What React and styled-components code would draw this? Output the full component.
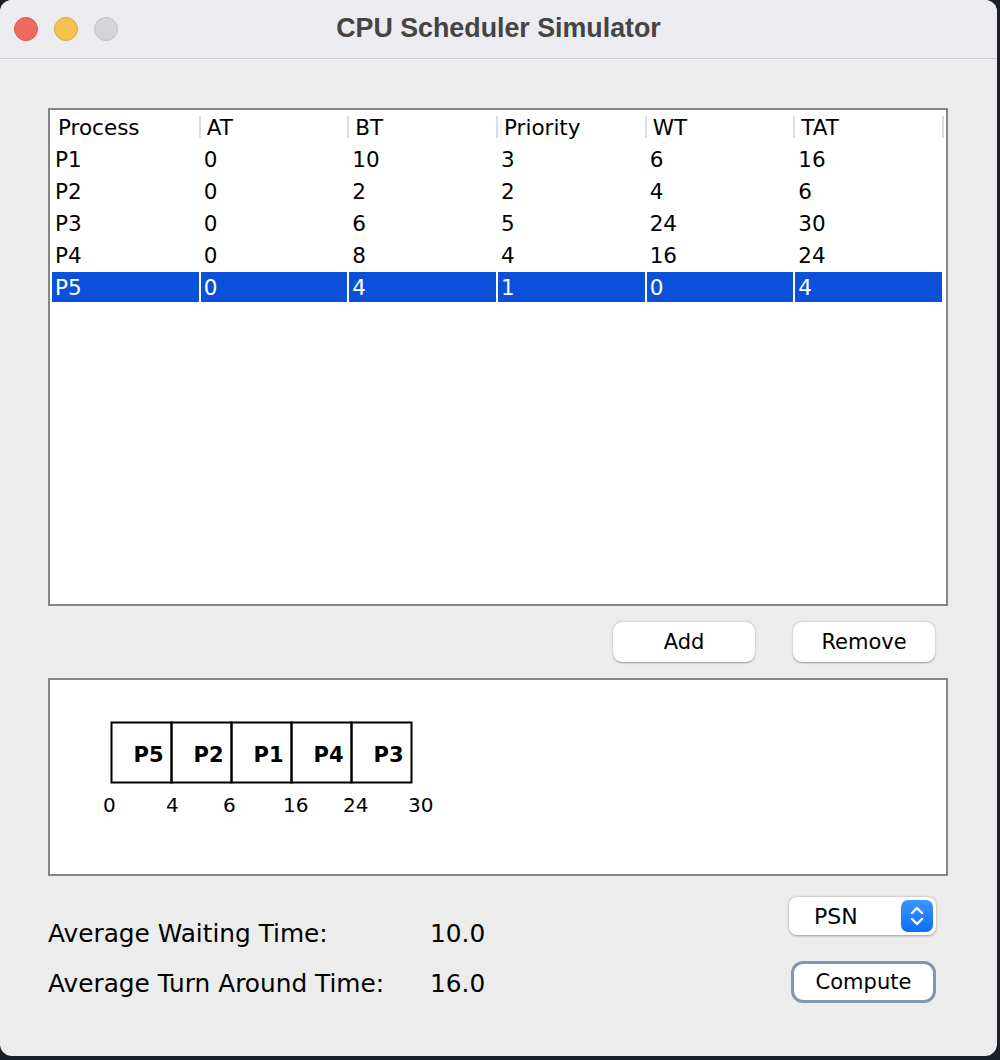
import React from 'react';
import styled, { createGlobalStyle } from 'styled-components';

const GlobalStyle = createGlobalStyle`
  html, body {
    margin: 0;
    padding: 0;
    background: #1c1f2c;
  }
  * { box-sizing: border-box; }
`;

const Window = styled.div`
  width: 997px;
  height: 1056px;
  border-radius: 12px;
  overflow: hidden;
  background: #ececec;
  display: flex;
  flex-direction: column;
  font-family: "DejaVu Sans", Verdana, sans-serif;
  color: #000;
`;

const TitleBar = styled.div`
  height: 59px;
  flex: none;
  background: #ecebf0;
  border-bottom: 1px solid #cfced3;
  display: grid;
  grid-template-columns: 1fr auto 1fr;
  align-items: center;
`;

const Lights = styled.div`
  display: flex;
  gap: 16px;
  padding-left: 14px;
`;

const Light = styled.span`
  width: 24px;
  height: 24px;
  border-radius: 50%;
  background: ${p => p.color};
  border: 1px solid ${p => p.edge};
`;

const Title = styled.div`
  font-family: "Liberation Sans", Arial, sans-serif;
  font-weight: 700;
  font-size: 26.8px;
  color: #444;
  padding-bottom: 1px;
`;

const Content = styled.div`
  flex: 1;
  padding: 49px 49px 0 48px;
  display: flex;
  flex-direction: column;
`;

const TablePanel = styled.div`
  height: 498px;
  border: 2px solid #858585;
  background: #fff;
  padding: 2px 4px 0 2px;
`;

const Grid = styled.div`
  display: grid;
  grid-template-columns: repeat(6, 1fr);
  grid-auto-rows: 30px;
  column-gap: 2px;
  row-gap: 2px;
  font-size: 21.5px;
`;

const HeadCell = styled.div`
  position: relative;
  line-height: 29px;
  padding: 1px 0 0 6px;
  &::after {
    content: '';
    position: absolute;
    right: -2px;
    top: 4px;
    height: 22px;
    width: 2px;
    background: #dcdcdc;
  }
`;

const Cell = styled.div`
  line-height: 28px;
  padding: 2px 0 0 3px;
  background: ${p => (p.selected ? '#0b50d8' : 'transparent')};
  color: ${p => (p.selected ? '#fff' : '#000')};
`;

const ButtonRow = styled.div`
  display: flex;
  justify-content: flex-end;
  gap: 38px;
  margin-top: 16px;
  padding-right: 13px;
`;

const PushButton = styled.button`
  width: 142px;
  height: 40px;
  border: none;
  border-radius: 9px;
  background: #fff;
  box-shadow: 0 0.5px 2px rgba(0, 0, 0, 0.35);
  font-family: "DejaVu Sans", Verdana, sans-serif;
  font-size: 21px;
  color: #000;
  padding: 0;
`;

const GanttPanel = styled.div`
  height: 198px;
  margin-top: 16px;
  border: 2px solid #858585;
  background: #fff;
`;

const Bottom = styled.div`
  display: flex;
  justify-content: space-between;
  align-items: flex-start;
  padding-right: 12px;
`;

const Stats = styled.div`
  display: grid;
  grid-template-columns: 382px auto;
  grid-auto-rows: 50px;
  align-items: center;
  margin-top: 32px;
  font-size: 24.8px;
`;

const Controls = styled.div`
  display: flex;
  flex-direction: column;
  align-items: flex-end;
  gap: 26px;
  margin-top: 21px;
`;

const Select = styled.div`
  width: 147px;
  height: 38px;
  border-radius: 8px;
  background: #fff;
  box-shadow: 0 0.5px 2.5px rgba(0, 0, 0, 0.35);
  display: flex;
  align-items: center;
  justify-content: space-between;
  padding: 0 3px 0 25px;
  font-size: 22px;
`;

const Stepper = styled.span`
  width: 32px;
  height: 32px;
  border-radius: 7px;
  background: linear-gradient(#3b95ff, #0b6ff2);
  display: flex;
  align-items: center;
  justify-content: center;
`;

const ComputeButton = styled(PushButton)`
  width: 145px;
  height: 42px;
  border: 3px solid #8595ab;
  border-radius: 12px;
  box-shadow: none;
`;

const processes = [
  ['P1', 0, 10, 3, 6, 16],
  ['P2', 0, 2, 2, 4, 6],
  ['P3', 0, 6, 5, 24, 30],
  ['P4', 0, 8, 4, 16, 24],
  ['P5', 0, 4, 1, 0, 4],
];

const gantt = [
  { name: 'P5', end: 4 },
  { name: 'P2', end: 6 },
  { name: 'P1', end: 16 },
  { name: 'P4', end: 24 },
  { name: 'P3', end: 30 },
];

const tickX = [53, 116, 173, 233, 293, 358];

const GanttChart = () => (
  <svg width="896" height="194" style={{ display: 'block' }}>
    {gantt.map((g, i) => {
      const x = 61.5 + i * 60;
      return (
        <g key={g.name}>
          <rect x={x} y={42.5} width={60} height={60} fill="none" stroke="#000" strokeWidth="2" />
          <text
            x={x + 52}
            y={82}
            textAnchor="end"
            fontFamily="DejaVu Sans, Verdana, sans-serif"
            fontWeight="700"
            fontSize="21"
          >
            {g.name}
          </text>
        </g>
      );
    })}
    {[0, ...gantt.map(g => g.end)].map((t, i) => (
      <text key={t} x={tickX[i]} y={132} fontFamily="DejaVu Sans, Verdana, sans-serif" fontSize="20">
        {t}
      </text>
    ))}
  </svg>
);

const App = () => (
  <>
    <GlobalStyle />
    <Window>
      <TitleBar>
        <Lights>
          <Light color="#ee6a5f" edge="#d85a50" />
          <Light color="#f5c14f" edge="#d9a73c" />
          <Light color="#d5d4d9" edge="#c2c1c6" />
        </Lights>
        <Title>CPU Scheduler Simulator</Title>
        <div />
      </TitleBar>
      <Content>
        <TablePanel>
          <Grid>
            {['Process', 'AT', 'BT', 'Priority', 'WT', 'TAT'].map(h => (
              <HeadCell key={h}>{h}</HeadCell>
            ))}
            {processes.map((row, r) =>
              row.map((v, c) => (
                <Cell key={`${r}-${c}`} selected={r === 4}>
                  {v}
                </Cell>
              ))
            )}
          </Grid>
        </TablePanel>
        <ButtonRow>
          <PushButton>Add</PushButton>
          <PushButton>Remove</PushButton>
        </ButtonRow>
        <GanttPanel>
          <GanttChart />
        </GanttPanel>
        <Bottom>
          <Stats>
            <span>Average Waiting Time:</span>
            <span>10.0</span>
            <span>Average Turn Around Time:</span>
            <span>16.0</span>
          </Stats>
          <Controls>
            <Select>
              <span>PSN</span>
              <Stepper>
                <svg width="16" height="24" viewBox="0 0 16 24" fill="none" stroke="#fff" strokeWidth="2.4" strokeLinecap="round" strokeLinejoin="round">
                  <path d="M3 9 L8 4 L13 9" />
                  <path d="M3 15 L8 20 L13 15" />
                </svg>
              </Stepper>
            </Select>
            <ComputeButton>Compute</ComputeButton>
          </Controls>
        </Bottom>
      </Content>
    </Window>
  </>
);

export default App;
